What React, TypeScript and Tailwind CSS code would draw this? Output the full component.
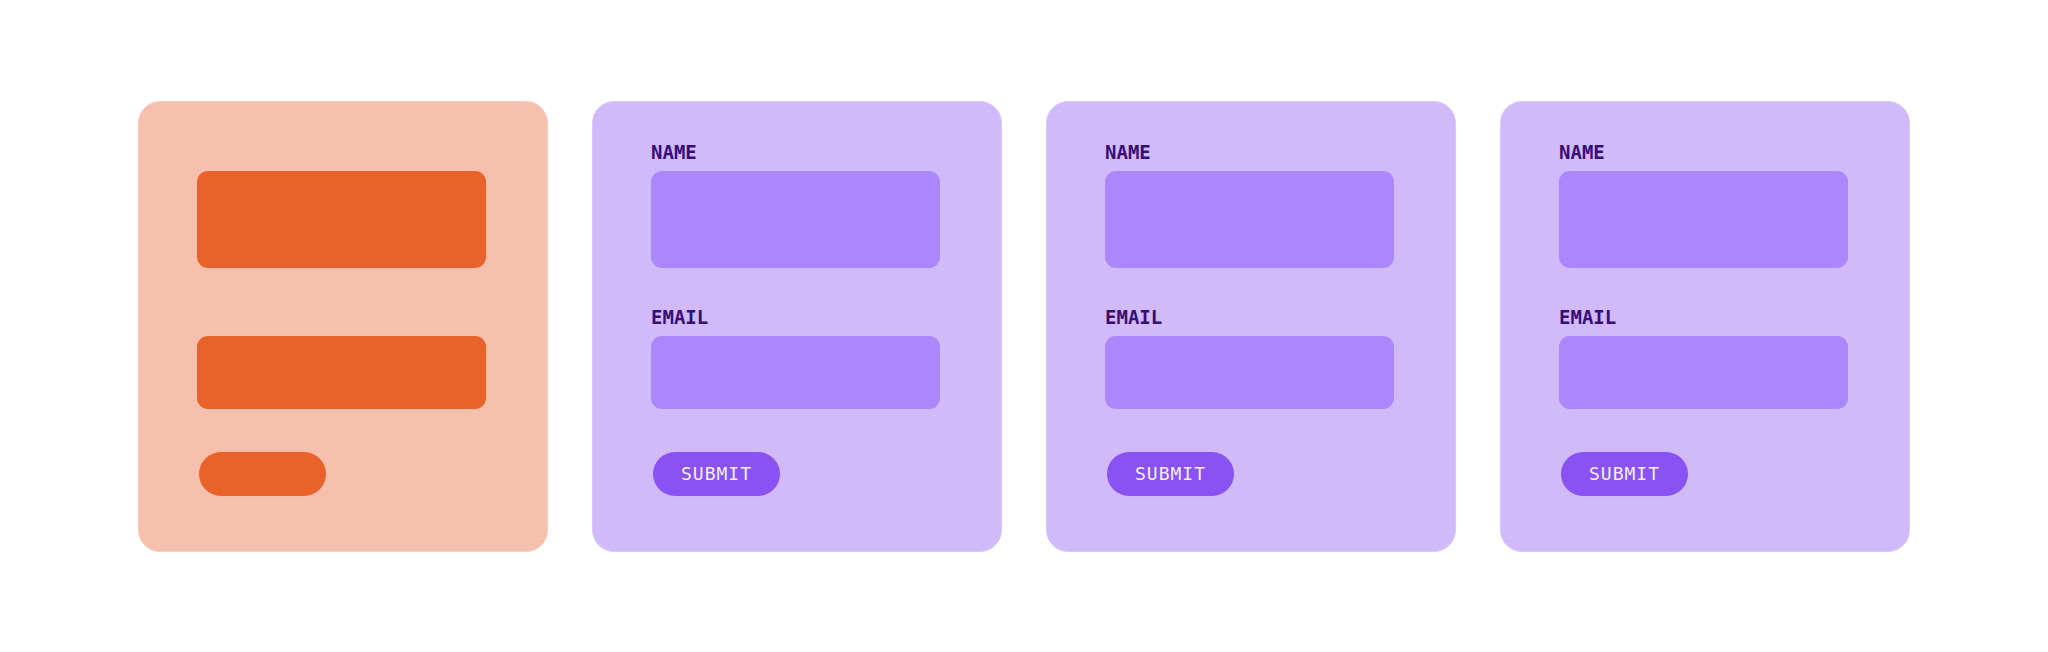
import clsx from "clsx";

type Tone = "skeleton" | "form";

const mono = "font-['DejaVu_Sans_Mono','Liberation_Mono',monospace]";

function Field({ label, tone, tall }: { label: string; tone: Tone; tall?: boolean }) {
	return (
		<div className="flex flex-col">
			{/* label keeps its space on the skeleton card so rows line up */}
			<span
				className={clsx(
					mono,
					"text-[19px] leading-none font-bold text-[#3a0c78] h-[19px]",
					tone === "skeleton" && "invisible"
				)}
			>
				{label}
			</span>
			<div
				className={clsx(
					"mt-[9px] w-[289px] rounded-[11px]",
					tall ? "h-[97px]" : "h-[73px]",
					tone === "skeleton" ? "bg-[#e8622a]" : "bg-[#ab86fd]"
				)}
			/>
		</div>
	);
}

function FormCard({ tone }: { tone: Tone }) {
	return (
		<div
			className={clsx(
				"w-[410px] h-[451px] rounded-[22px] border pl-[58px] pt-[41px] flex flex-col",
				tone === "skeleton"
					? "bg-[#f7bfae] border-[#f9cbbd]"
					: "bg-[#d0bafa] border-[#d9c7fb]"
			)}
		>
			<Field label="NAME" tone={tone} tall />
			<div className="mt-[40px]">
				<Field label="EMAIL" tone={tone} />
			</div>
			<button
				type="button"
				className={clsx(
					mono,
					"mt-[43px] ml-[2px] w-[127px] h-[44px] rounded-full text-[18px] tracking-[1px] leading-none",
					tone === "skeleton"
						? "bg-[#e8622a] text-transparent"
						: "bg-[#8a52f2] text-[#f4eeff]"
				)}
			>
				{tone === "skeleton" ? "" : "SUBMIT"}
			</button>
		</div>
	);
}

export default function App() {
	return (
		<div className="w-[2048px] h-[652px] bg-white flex items-center justify-center gap-[44px]">
			<FormCard tone="skeleton" />
			<FormCard tone="form" />
			<FormCard tone="form" />
			<FormCard tone="form" />
		</div>
	);
}
